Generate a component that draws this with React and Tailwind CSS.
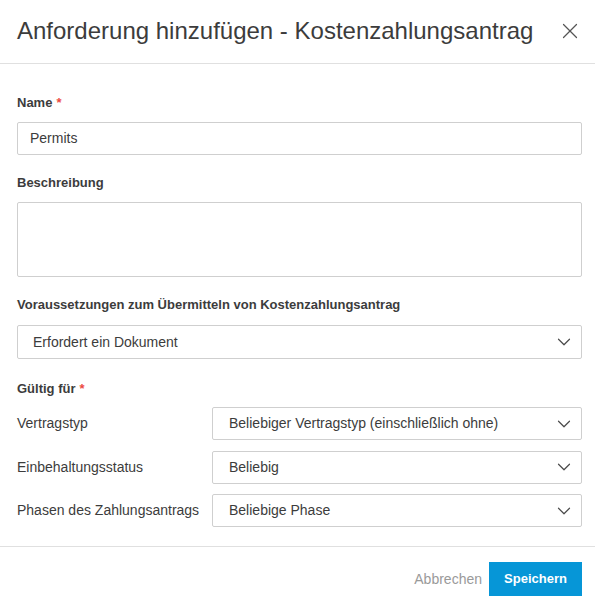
import { ChevronDown, X } from "lucide-react";

function Label({ children, required, className = "" }) {
  return (
    <div className={"text-[13px] leading-[18px] font-bold text-[#3c3c3c] " + className}>
      {children}
      {required && <span className="text-[#ec4a41] ml-1">*</span>}
    </div>
  );
}

function Select({ value, className = "" }) {
  return (
    <div
      className={
        "border border-[#cfcfcf] rounded-[2px] flex items-center justify-between pr-[6px] text-[14px] text-[#3c3c3c] " +
        className
      }
    >
      <span>{value}</span>
      <ChevronDown size={22} strokeWidth={1.3} className="text-[#4a4a4a]" />
    </div>
  );
}

export default function App() {
  const rows = [
    { label: "Vertragstyp", value: "Beliebiger Vertragstyp (einschließlich ohne)" },
    { label: "Einbehaltungsstatus", value: "Beliebig" },
    { label: "Phasen des Zahlungsantrags", value: "Beliebige Phase" },
  ];

  return (
    <div
      className="w-[595px] h-[611px] bg-white flex flex-col"
      style={{ fontFamily: '"Liberation Sans", Arial, sans-serif' }}
    >
      <div className="h-[64px] pl-[17px] pr-[12px] pb-[2px] flex items-center justify-between border-b border-[#e0e0e0] shrink-0">
        <h1 className="text-[24px] text-[#3c3c3c] font-normal">
          Anforderung hinzufügen - Kostenzahlungsantrag
        </h1>
        <X size={26} strokeWidth={1.1} className="text-[#555]" />
      </div>

      <div className="pl-[17px] pr-[13px] pt-[30px] pb-[19px] flex flex-col">
        <Label required className="mb-[10px]">Name</Label>
        <div className="h-[33px] border border-[#cfcfcf] rounded-[2px] flex items-center pl-[12px] text-[14px] text-[#3c3c3c]">
          Permits
        </div>

        <Label className="mt-[19px] mb-[10px]">Beschreibung</Label>
        <div className="h-[75px] border border-[#cfcfcf] rounded-[2px]" />

        <Label className="mt-[19px] mb-[11px]">
          Voraussetzungen zum Übermitteln von Kostenzahlungsantrag
        </Label>
        <Select value="Erfordert ein Dokument" className="h-[34px] pl-[15px]" />

        <Label required className="mt-[21px] mb-[9px]">Gültig für</Label>
        <div className="flex flex-col gap-[10.5px]">
          {rows.map((r) => (
            <div key={r.label} className="flex items-center">
              <div className="w-[195px] shrink-0 text-[14px] text-[#3c3c3c]">{r.label}</div>
              <Select value={r.value} className="flex-1 h-[33px] pl-[16px]" />
            </div>
          ))}
        </div>
      </div>

      <div className="border-t border-[#e0e0e0] pr-[13px] pt-[15px] flex justify-end items-center gap-[7px]">
        <button className="text-[14px] text-[#9a9a9a] h-[34px]">Abbrechen</button>
        <button className="h-[34px] w-[93px] bg-[#0696d7] text-white text-[13px] font-bold">
          Speichern
        </button>
      </div>
    </div>
  );
}
